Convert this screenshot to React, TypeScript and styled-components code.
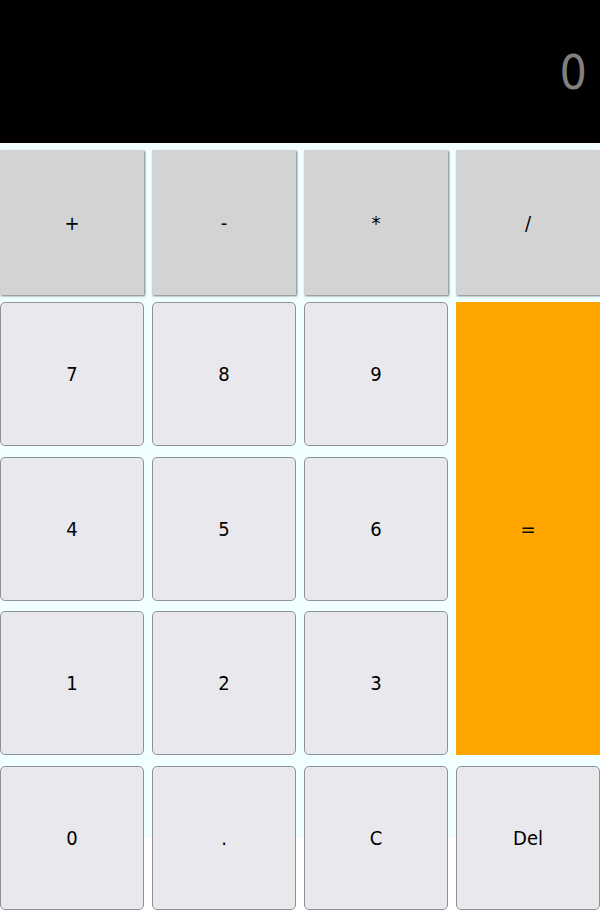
import styled, { createGlobalStyle } from "styled-components";

const GlobalStyle = createGlobalStyle`
  html, body {
    margin: 0;
    padding: 0;
    background: white;
    min-height: 911px;
    font-family: "DejaVu Sans Condensed", "DejaVu Sans", sans-serif;
  }
`;

const Calculator = styled.div`
  width: 600px;
  height: 838px;
  background: azure;
`;

const Display = styled.div`
  height: 143px;
  background: black;
  color: gray;
  font-size: 48px;
  display: flex;
  align-items: center;
  justify-content: flex-end;
  padding-right: 13px;
  box-sizing: border-box;
`;

const OperatorRow = styled.div`
  display: grid;
  grid-template-columns: repeat(4, 1fr);
  column-gap: 8px;
  padding-top: 7px;
  height: 145px;
  margin-bottom: 7px;
`;

const Operator = styled.button`
  height: 145px;
  border: none;
  background: lightgray;
  box-shadow: 1px 1px 2px 0 #777;
  font-family: inherit;
  font-size: 20px;
  color: black;
`;

const Keypad = styled.div`
  display: grid;
  grid-template-columns: repeat(4, 1fr);
  grid-template-rows: repeat(4, 144px);
  column-gap: 8px;
  row-gap: 10.5px;
`;

const Key = styled.button<{ $equals?: boolean }>`
  border: ${(p) => (p.$equals ? "none" : "1px solid #8f8f9d")};
  border-radius: ${(p) => (p.$equals ? "0" : "5px")};
  background: ${(p) => (p.$equals ? "orange" : "#e9e9ed")};
  grid-row: ${(p) => (p.$equals ? "1 / span 3" : "auto")};
  grid-column: ${(p) => (p.$equals ? "4" : "auto")};
  font-family: inherit;
  font-size: 20px;
  color: black;
  padding: 0;
`;

export default function App() {
  const ops = ["+", "-", "*", "/"];
  const keys = ["7", "8", "9", "4", "5", "6", "1", "2", "3"];
  return (
    <>
      <GlobalStyle />
      <Calculator>
        <Display>0</Display>
        <OperatorRow>
          {ops.map((o) => (
            <Operator key={o}>{o}</Operator>
          ))}
        </OperatorRow>
        <Keypad>
          <Key $equals>=</Key>
          {keys.map((k) => (
            <Key key={k}>{k}</Key>
          ))}
          <Key>0</Key>
          <Key>.</Key>
          <Key>C</Key>
          <Key>Del</Key>
        </Keypad>
      </Calculator>
    </>
  );
}
